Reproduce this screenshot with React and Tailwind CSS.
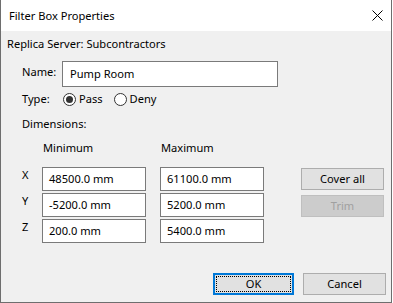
import React from 'react';

const Field = ({ value, className = '' }) => (
    <div className={`h-[24px] bg-white border border-[#7a7a7a] flex items-center pl-[6px] ${className}`}>
        {value}
    </div>
);

const Radio = ({ checked, label }) => (
    <div className="flex items-center gap-[3px]">
        <span className="w-[13px] h-[13px] rounded-full border border-[#333] bg-white flex items-center justify-center">
            {checked && <span className="w-[7px] h-[7px] rounded-full bg-[#333]" />}
        </span>
        <span>{label}</span>
    </div>
);

const App = () => {
    const rows = [
        ['X', '48500.0 mm', '61100.0 mm'],
        ['Y', '-5200.0 mm', '5200.0 mm'],
        ['Z', '200.0 mm', '5400.0 mm'],
    ];

    return (
        <div className="w-[392px] h-[303px] bg-[#f0f0f0] border-x border-b border-[#6e6e6e] flex flex-col text-[11.1px] leading-[16px] text-black font-['Segoe_UI','Noto_Sans',sans-serif]">
            {/* Title bar */}
            <div className="h-[31px] shrink-0 bg-white flex items-center justify-between pl-[8px] pr-[8px]">
                <span>Filter Box Properties</span>
                <svg width="11" height="11" viewBox="0 0 11 11">
                    <path d="M0.5 0.5 L10.5 10.5 M10.5 0.5 L0.5 10.5" stroke="#000" strokeWidth="1" fill="none" />
                </svg>
            </div>

            <div className="flex flex-col pl-[6px] pr-[5px] pt-[5px] flex-1">
                <div>Replica Server: Subcontractors</div>

                <div className="pl-[15px]">
                    {/* Name */}
                    <div className="flex items-start mt-[9px]">
                        <span className="w-[40px] mt-[3px]">Name:</span>
                        <div className="w-[216px] h-[26px] bg-white border border-[#7a7a7a] flex items-center pl-[7px]">
                            Pump Room
                        </div>
                    </div>

                    {/* Type */}
                    <div className="flex items-center mt-[4px]">
                        <span className="w-[41px]">Type:</span>
                        <div className="flex items-center gap-[11px]">
                            <Radio checked label="Pass" />
                            <Radio label="Deny" />
                        </div>
                    </div>

                    <div className="mt-[9px]">Dimensions:</div>

                    <div className="flex mt-[8px]">
                        <span className="ml-[21px] w-[118px]">Minimum</span>
                        <span>Maximum</span>
                    </div>

                    <div className="flex mt-[11px]">
                        <div className="flex flex-col gap-[2px]">
                            {rows.map(([axis, min, max]) => (
                                <div key={axis} className="flex items-start">
                                    <span className="w-[20px]">{axis}</span>
                                    <Field value={min} className="w-[104px]" />
                                    <Field value={max} className="w-[104px] ml-[14px]" />
                                </div>
                            ))}
                        </div>
                        <div className="flex flex-col gap-[5px] ml-[37px] mt-[1px]">
                            <button className="w-[83px] h-[22px] bg-[#e1e1e1] border border-[#adadad]">Cover all</button>
                            <button disabled className="w-[83px] h-[22px] bg-[#cccccc] border border-[#bfbfbf] text-[#a0a0a0]">Trim</button>
                        </div>
                    </div>
                </div>

                <div className="mt-auto mb-[7px] flex justify-end gap-[9px]">
                    <button className="w-[81px] h-[22px] bg-[#e1e1e1] border-2 border-[#0078d7] p-[1px]">
                        <span className="w-full h-full flex items-center justify-center border border-dotted border-black">OK</span>
                    </button>
                    <button className="w-[83px] h-[22px] bg-[#e1e1e1] border border-[#adadad]">Cancel</button>
                </div>
            </div>
        </div>
    );
};

export default App;
